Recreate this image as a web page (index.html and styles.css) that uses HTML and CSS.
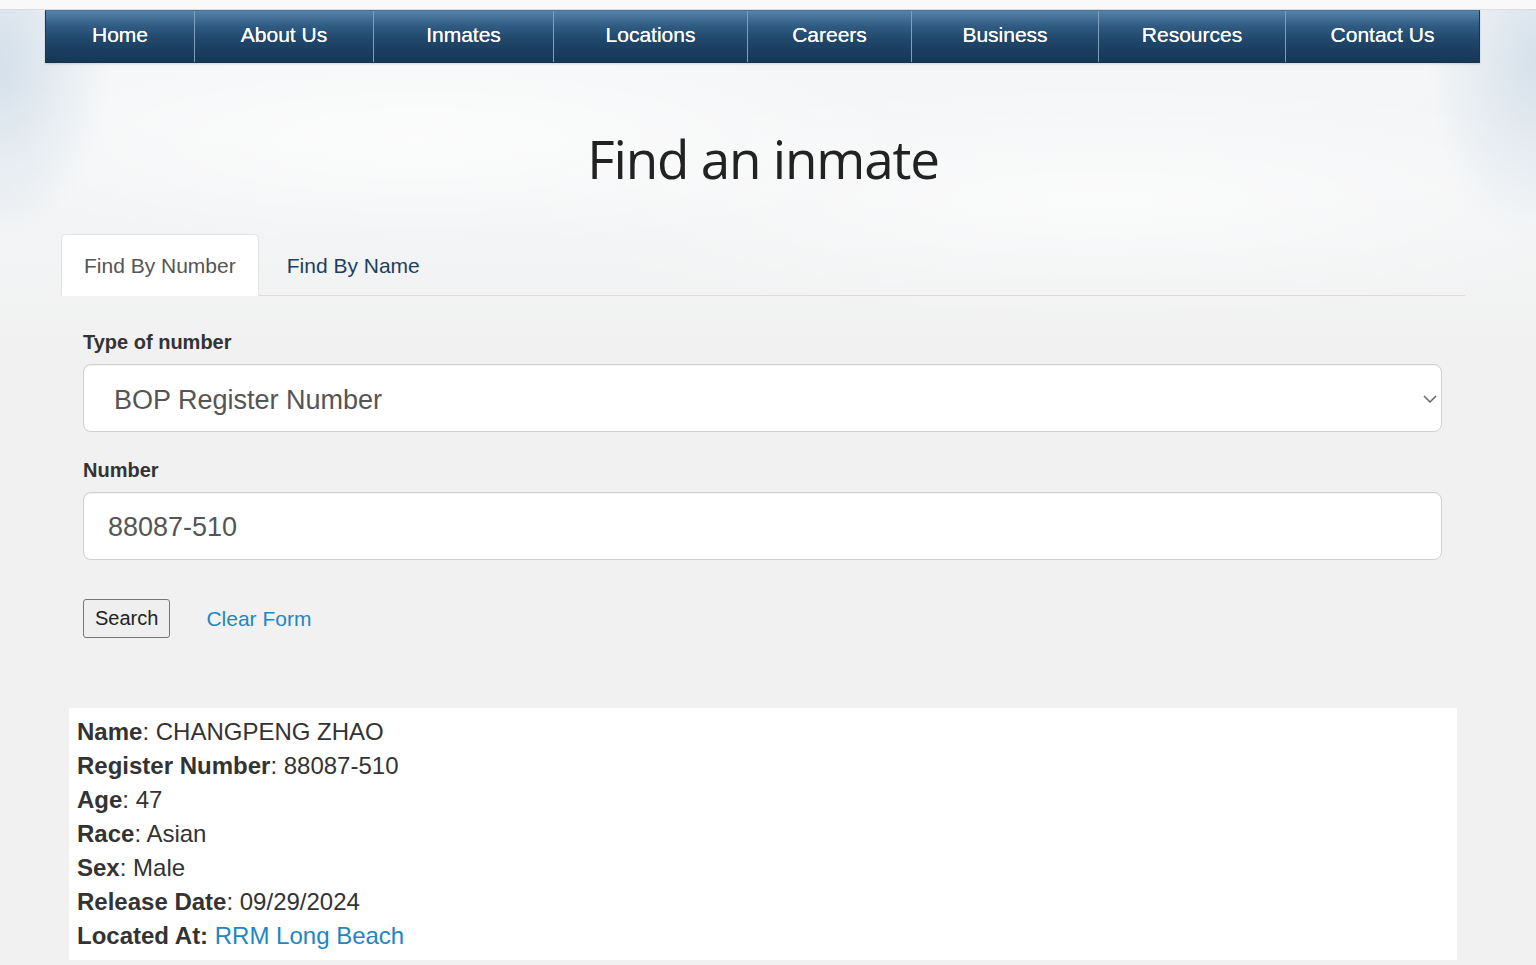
FILE: index.html
```html
<!DOCTYPE html>
<html lang="en">
<head>
<meta charset="utf-8">
<title>Find an inmate</title>
<link rel="stylesheet" href="styles.css">
</head>
<body>
<div class="topstrip"></div>
<div class="page">
  <nav class="nav">
    <a class="nav-item w1" href="#">Home</a>
    <a class="nav-item w2" href="#">About Us</a>
    <a class="nav-item w3" href="#">Inmates</a>
    <a class="nav-item w4" href="#">Locations</a>
    <a class="nav-item w5" href="#">Careers</a>
    <a class="nav-item w6" href="#">Business</a>
    <a class="nav-item w7" href="#">Resources</a>
    <a class="nav-item w8" href="#">Contact Us</a>
  </nav>

  <main class="main">
    <h1 class="title">Find an inmate</h1>

    <div class="tabs">
      <a class="tab active" href="#">Find By Number</a>
      <a class="tab" href="#">Find By Name</a>
    </div>

    <form class="form">
      <label class="label" for="type">Type of number</label>
      <div class="select-wrap">
        <select id="type" class="field select">
          <option>BOP Register Number</option>
        </select>
        <svg class="chevron" width="14" height="8" viewBox="0 0 14 8"><path d="M1 1 L7 7 L13 1" fill="none" stroke="#666" stroke-width="1.5"/></svg>
      </div>

      <label class="label" for="num">Number</label>
      <input id="num" class="field input" type="text" value="88087-510">

      <div class="actions">
        <button type="button" class="btn">Search</button>
        <a class="clear" href="#">Clear Form</a>
      </div>
    </form>

    <div class="result">
      <div><b>Name</b>: CHANGPENG ZHAO</div>
      <div><b>Register Number</b>: 88087-510</div>
      <div><b>Age</b>: 47</div>
      <div><b>Race</b>: Asian</div>
      <div><b>Sex</b>: Male</div>
      <div><b>Release Date</b>: 09/29/2024</div>
      <div><b>Located At:</b> <a class="link" href="#">RRM Long Beach</a></div>
    </div>
  </main>
</div>
</body>
</html>
```

FILE: styles.css
```css
* { box-sizing: border-box; }
html, body { margin: 0; padding: 0; }
body {
  font-family: "Liberation Sans", Arial, sans-serif;
  color: #333;
  background: #f1f1f1;
  height: 965px;
  overflow: hidden;
}
.topstrip {
  height: 10px;
  background: #f9f9f9;
  border-bottom: 1px solid #d9dee3;
}
.page {
  background:
    radial-gradient(ellipse 110px 180px at 0 50px, rgba(200,216,230,0.75), rgba(200,216,230,0) 100%),
    radial-gradient(ellipse 110px 180px at 100% 50px, rgba(200,216,230,0.7), rgba(200,216,230,0) 100%),
    radial-gradient(ellipse 500px 110px at 420px 130px, rgba(255,255,255,0.7), rgba(255,255,255,0)),
    radial-gradient(ellipse 600px 120px at 1100px 190px, rgba(255,255,255,0.6), rgba(255,255,255,0)),
    linear-gradient(#f6f7f8 0, #f3f4f5 220px, #f1f1f1 340px);
  padding-bottom: 5px;
}
.nav {
  display: flex;
  margin-left: 45px;
  width: 1435px;
  height: 53px;
  background: linear-gradient(#5383aa 0, #2f5a82 30%, #1f4568 60%, #163656 100%);
  border: 1px solid #1a3552;
  border-top-color: #4a7398;
  box-shadow: 0 1px 2px rgba(0,0,0,0.15);
}
.nav-item {
  display: flex;
  align-items: center;
  justify-content: center;
  color: #fff;
  font-size: 21px;
  text-decoration: none;
  border-left: 1px solid #7f9fbd;
  padding-bottom: 4px;
  text-shadow: 0 0 0.5px #fff;
}
.nav-item.w1 { border-left: none; width: 148px; }
.nav-item.w2 { width: 179px; }
.nav-item.w3 { width: 180px; }
.nav-item.w4 { width: 194px; }
.nav-item.w5 { width: 164px; }
.nav-item.w6 { width: 187px; }
.nav-item.w7 { width: 187px; }
.nav-item.w8 { flex: 1; }

.main {
  width: 1404px;
  margin-left: 61px;
}
.title {
  margin: 61px 0 0;
  font-family: "Open Sans", sans-serif;
  font-weight: 400;
  font-size: 53px;
  letter-spacing: -1.2px;
  line-height: 70px;
  text-align: center;
  color: #222;
}
.tabs {
  display: flex;
  margin-top: 40px;
  border-bottom: 1px solid #dcdcdc;
  height: 62px;
}
.tab {
  display: flex;
  align-items: center;
  white-space: nowrap;
  height: 62px;
  padding: 2px 23px 0 27px;
  font-size: 21px;
  text-decoration: none;
  color: #1c3f61;
  border: 1px solid transparent;
  border-radius: 5px 5px 0 0;
}
.tab.active {
  background: #fff;
  color: #555;
  border-color: #e2e2e2;
  border-bottom-color: #fff;
  padding: 2px 22px 0 22px;
  margin-right: 0;
}
.form {
  display: flex;
  flex-direction: column;
  padding: 0 23px 0 22px;
}
.label {
  font-size: 20px;
  font-weight: bold;
  color: #333;
  line-height: 24px;
}
.label[for="type"] { margin-top: 34px; margin-bottom: 10px; }
.label[for="num"] { margin-top: 26px; margin-bottom: 10px; }
.select-wrap { position: relative; }
.field {
  display: block;
  width: 100%;
  height: 68px;
  background: #fff;
  border: 1px solid #cfcfcf;
  border-radius: 8px;
  font-family: "Liberation Sans", Arial, sans-serif;
  font-size: 27px;
  color: #555;
  box-shadow: inset 0 1px 1px rgba(0,0,0,0.05);
}
.select {
  appearance: none;
  -webkit-appearance: none;
  padding: 3px 40px 0 30px;
}
.input { padding: 3px 24px 0; outline: none; }
.chevron {
  position: absolute;
  right: 5px;
  top: 31px;
  width: 14px;
  height: 8px;
}
.actions {
  display: flex;
  align-items: center;
  gap: 36px;
  margin-top: 39px;
}
.btn {
  height: 39px;
  padding: 0 11px;
  font-family: "Liberation Sans", Arial, sans-serif;
  font-size: 20px;
  color: #222;
  background: #efefef;
  border: 1px solid #767676;
  border-radius: 3px;
}
.clear {
  font-size: 21px;
  color: #1d87c2;
  text-decoration: none;
}
.result {
  margin: 70px 8px 0;
  background: #fff;
  padding: 7px 8px 7px;
  font-size: 24px;
  line-height: 34px;
  color: #333;
}
.result b { color: #333; }
.link { color: #1d87c2; text-decoration: none; }
```
